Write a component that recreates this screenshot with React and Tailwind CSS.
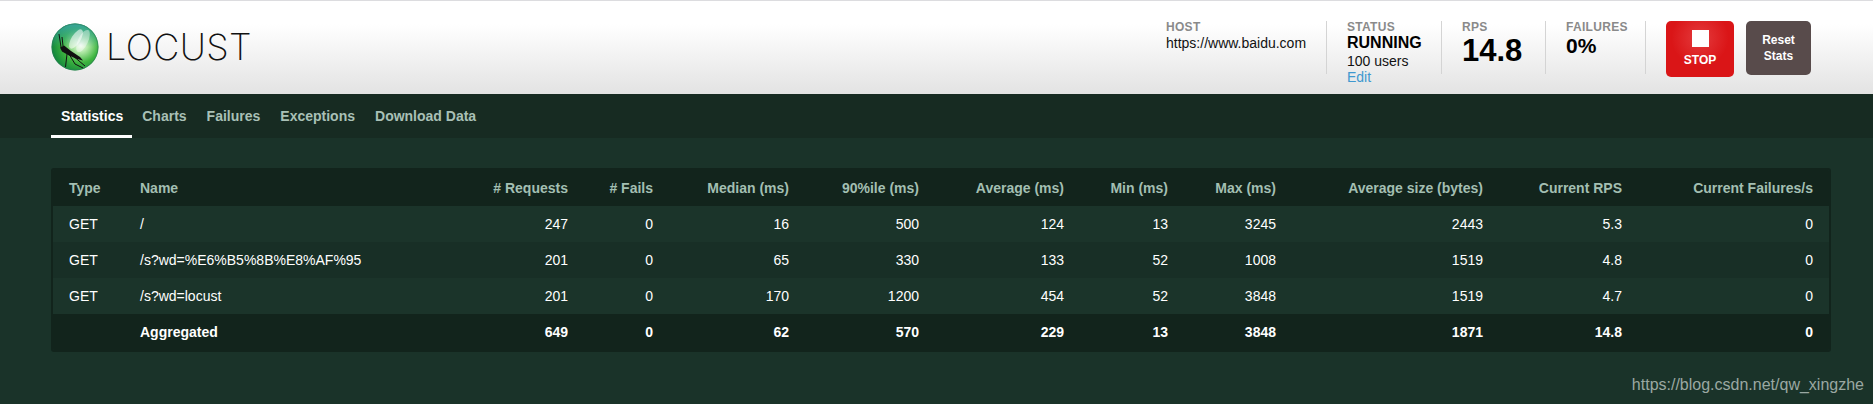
const cols = [71, 353, 107, 85, 136, 130, 145, 104, 108, 207, 139, 191];
const heads = ["Type", "Name", "# Requests", "# Fails", "Median (ms)", "90%ile (ms)", "Average (ms)", "Min (ms)", "Max (ms)", "Average size (bytes)", "Current RPS", "Current Failures/s"];
const rows = [
  ["GET", "/", "247", "0", "16", "500", "124", "13", "3245", "2443", "5.3", "0"],
  ["GET", "/s?wd=%E6%B5%8B%E8%AF%95", "201", "0", "65", "330", "133", "52", "1008", "1519", "4.8", "0"],
  ["GET", "/s?wd=locust", "201", "0", "170", "1200", "454", "52", "3848", "1519", "4.7", "0"],
];
const total = ["", "Aggregated", "649", "0", "62", "570", "229", "13", "3848", "1871", "14.8", "0"];
const tabs = ["Statistics", "Charts", "Failures", "Exceptions", "Download Data"];

function Logo() {
  return (
    <svg width="48" height="48" viewBox="51 23 48 48" className="shrink-0">
      <defs>
        <radialGradient id="ball" cx="62%" cy="46%" r="62%">
          <stop offset="0" stopColor="#f6fcf4" />
          <stop offset="0.25" stopColor="#b0e8a6" />
          <stop offset="0.6" stopColor="#3fb53f" />
          <stop offset="1" stopColor="#12863c" />
        </radialGradient>
        <linearGradient id="top" x1="0" y1="0" x2="0" y2="1">
          <stop offset="0" stopColor="#38a5a0" stopOpacity="0.95" />
          <stop offset="0.5" stopColor="#38a5a0" stopOpacity="0" />
        </linearGradient>
      </defs>
      <circle cx="75" cy="47" r="23.5" fill="url(#ball)" />
      <circle cx="75" cy="47" r="23.5" fill="url(#top)" />
      <circle cx="75" cy="47" r="23" fill="none" stroke="#2e7a5c" strokeOpacity="0.6" />
      <ellipse cx="76" cy="39" rx="4.5" ry="11" transform="rotate(32 76 39)" fill="#fff" fillOpacity="0.55" />
      <ellipse cx="83" cy="41" rx="5" ry="12" transform="rotate(25 83 41)" fill="#fff" fillOpacity="0.4" />
      <path d="M60 47.5 L64 45.5 L71 51 L80 57 L83 60.5 L77 59 L69 55.5 L62 51.5 Z" fill="#111" />
      <path d="M61 47 L59 34 M63 46 L62 37 M67 54 L65.5 67 M69 54 L75 64 L83 68 M72 55 L85 66" fill="none" stroke="#111" strokeWidth="1" />
    </svg>
  );
}

function Stat({ label, children, className }) {
  return (
    <div className={"h-[53px] border-r border-[#d4d4d4] " + className}>
      <div className="text-[12px] leading-[13px] font-bold text-[#8a8a8a] tracking-[0.3px]">{label}</div>
      {children}
    </div>
  );
}

export default function App() {
  return (
    <div className="relative min-h-[404px] bg-[#1a3329] text-white font-['Liberation_Sans',Arial,sans-serif]">
      <header className="h-[94px] border-t border-[#dcdcdf] bg-gradient-to-b from-white from-[25%] to-[#e3e3e3] pl-[51px] pr-[62px] flex items-center justify-between">
        <div className="flex items-center gap-[7px] -mt-[1px]">
          <Logo />
          <span className="font-['Inter',sans-serif] font-extralight text-[#111] text-[36px] leading-none tracking-[0.4px]">LOCUST</span>
        </div>
        <div className="flex items-start self-start mt-[20px] text-[#111]">
          <Stat label="HOST" className="w-[161px]">
            <div className="text-[14px] leading-[18px]">https://www.baidu.com</div>
          </Stat>
          <Stat label="STATUS" className="w-[115px] pl-5">
            <div className="text-[16px] leading-[18px] font-bold text-black">RUNNING</div>
            <div className="text-[14px] leading-[18px]">100 users</div>
            <a className="block text-[14px] leading-[15px] text-[#3f98cf]">Edit</a>
          </Stat>
          <Stat label="RPS" className="w-[104px] pl-5">
            <div className="text-[31px] leading-[34px] font-bold text-black">14.8</div>
          </Stat>
          <Stat label="FAILURES" className="w-[100px] pl-5">
            <div className="text-[21px] leading-[24px] font-bold text-black">0%</div>
          </Stat>
          <button className="ml-5 w-[68px] h-[56px] rounded-[5px] bg-[radial-gradient(circle_at_50%_30%,#e43b3d_0,#da1517_55%)] text-white text-[12px] font-bold flex flex-col items-center">
            <span className="block w-[17px] h-[17px] bg-white mt-[9px] mb-[6px]"></span>
            <span className="leading-[14px]">STOP</span>
          </button>
          <button className="ml-3 w-[65px] h-[54px] rounded-[5px] bg-[#584b4b] text-white text-[12px] leading-[16px] font-bold">
            Reset<br />Stats
          </button>
        </div>
      </header>

      <nav className="h-[44px] bg-[#172b22] pl-[51px] flex text-[14px] font-bold">
        {tabs.map((t, i) => (
          <a key={t} className={"h-full pt-[13px] leading-[18px] " + (i === 0 ? "pl-[10px] pr-[9px] text-white border-b-[3px] border-white" : "px-[10px] text-[#a9c0b6]")}>{t}</a>
        ))}
      </nav>

      <main className="pt-[30px] pl-[51px] pr-[42px]">
        <div className="border-2 border-[#12241c] rounded-[3px] overflow-hidden">
          <table className="w-full table-fixed border-collapse text-[14px]">
            <colgroup>
              {cols.map((w, i) => <col key={i} style={{ width: w }} />)}
            </colgroup>
            <thead>
              <tr className="h-[36px] bg-[#12241c] text-[#a3bfb2] font-bold">
                {heads.map((h, i) => (
                  <th key={h} className={"px-4 font-bold " + (i < 2 ? "text-left" : "text-right")}>{h}</th>
                ))}
              </tr>
            </thead>
            <tbody>
              {rows.map((r, ri) => (
                <tr key={ri} className={"h-[36px] " + (ri % 2 === 0 ? "bg-[#1b342a]" : "bg-[#182f26]")}>
                  {r.map((c, i) => (
                    <td key={i} className={"px-4 " + (i < 2 ? "text-left" : "text-right")}>{c}</td>
                  ))}
                </tr>
              ))}
              <tr className="h-[36px] bg-[#12241c] font-bold">
                {total.map((c, i) => (
                  <td key={i} className={"px-4 " + (i < 2 ? "text-left" : "text-right")}>{c}</td>
                ))}
              </tr>
            </tbody>
          </table>
        </div>
      </main>

      <div className="absolute right-[9px] top-[376px] text-[16px] leading-[18px] text-[#9aa8a2]">https://blog.csdn.net/qw_xingzhe</div>
    </div>
  );
}
